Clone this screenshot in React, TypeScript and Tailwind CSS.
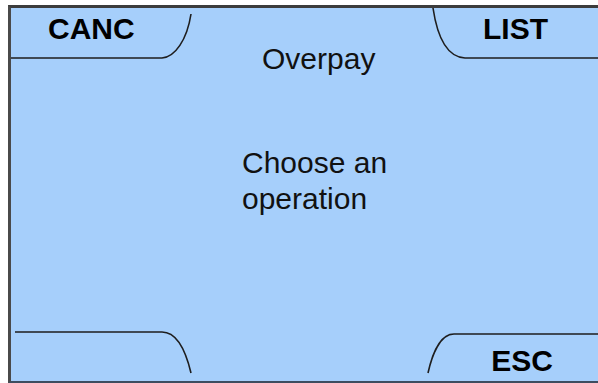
import React from "react";

export default function App() {
  return (
    <div
      className="relative w-[598px] h-[383px] bg-white pl-[8px] pt-[5px] overflow-hidden"
      style={{ fontFamily: '"Liberation Sans", Arial, sans-serif' }}
    >
      <div className="w-[590px] h-[378px] bg-[#a6cffb] border-l-[3px] border-t-[3px] border-b-2 border-l-[#4a4a4a] border-t-[#3c3c3c] border-b-[#3d4d60] flex flex-col text-black">
        <div className="flex justify-between pt-[6px] pl-[37px] pr-[50px] text-[30px] leading-[30px] font-bold">
          <span>CANC</span>
          <span>LIST</span>
        </div>
        <div className="pl-[251px] text-[30px] leading-[30px] text-[#111]">Overpay</div>
        <div className="pl-[231px] mt-[71px] text-[30px] leading-[36px] text-[#111]">
          <div>Choose an</div>
          <div>operation</div>
        </div>
        <div className="mt-auto flex justify-end pr-[45px] pb-[5px] text-[30px] leading-[30px] font-bold">
          <span>ESC</span>
        </div>
      </div>
      <svg
        className="absolute top-0 left-0 pointer-events-none"
        width="598"
        height="383"
        viewBox="0 0 598 383"
        fill="none"
        stroke="#1e1e1e"
        strokeWidth="1.6"
      >
        <path d="M11 58 H162 C175 57 187 40 191 14" />
        <path d="M433 8 C437 35 446 57 465 58 H598" />
        <path d="M15 332 H162 C177 332 186 352 191 373" />
        <path d="M428 373 C432 355 440 334 454 334 H598" />
      </svg>
    </div>
  );
}
